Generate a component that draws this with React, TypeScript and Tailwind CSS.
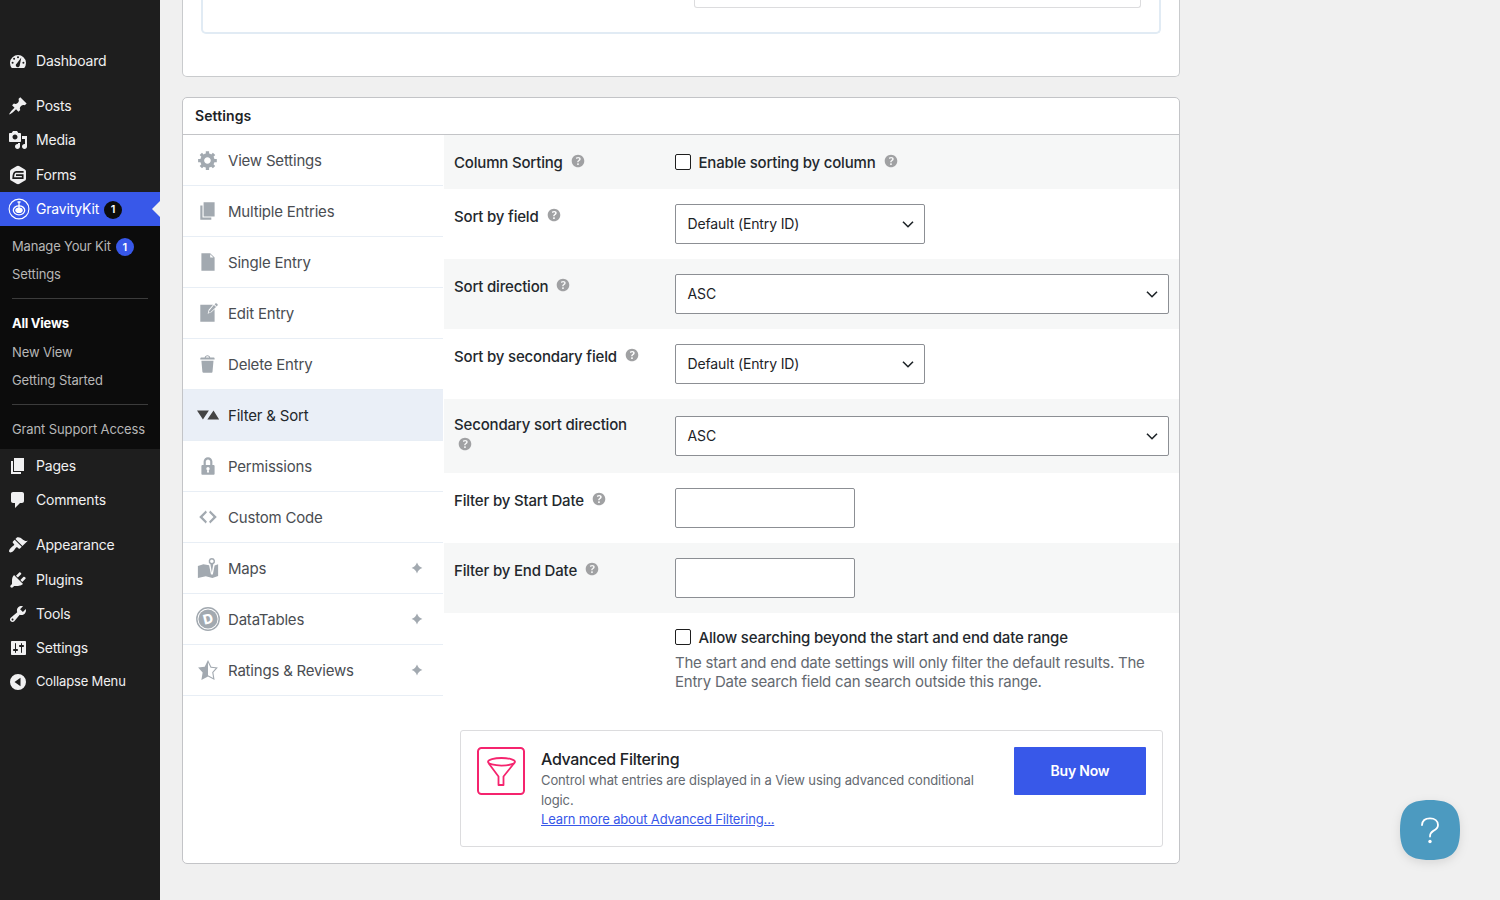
import type { ReactNode } from 'react'

const icons: Record<string, string> = {
    post: 'M10.44 3.02l1.82-1.82 6.36 6.35-1.83 1.82c-1.05-.68-2.48-.57-3.41.36l-.75.75c-.92.93-1.04 2.35-.35 3.41l-1.83 1.82-2.41-2.41-2.8 2.79c-.42.42-3.38 2.71-3.8 2.29s1.86-3.39 2.28-3.81l2.79-2.79L4.1 9.36l1.83-1.82c1.05.69 2.48.57 3.4-.36l.75-.75c.93-.92 1.05-2.35.36-3.41z',
    media: 'M13 11V4c0-.55-.45-1-1-1h-1.67L9 1H5L3.67 3H2c-.55 0-1 .45-1 1v7c0 .55.45 1 1 1h10c.55 0 1-.45 1-1zM7 4.5c1.38 0 2.5 1.12 2.5 2.5S8.38 9.5 7 9.5 4.5 8.38 4.5 7 5.62 4.5 7 4.5zM14 6h5v10.5c0 1.38-1.12 2.5-2.5 2.5S14 17.88 14 16.5s1.12-2.5 2.5-2.5c.17 0 .34.02.5.05V9h-3V6zm-4 8.05V13h2v3.5c0 1.38-1.12 2.5-2.5 2.5S7 17.88 7 16.5 8.12 14 9.5 14c.17 0 .34.02.5.05z',
    pages: 'M6 15V2h10v13H6zm-1 1h8v2H3V5h2v11z',
    comments: 'M5 2h9c1.1 0 2 .9 2 2v7c0 1.1-.9 2-2 2h-2l-5 5v-5H5c-1.1 0-2-.9-2-2V4c0-1.1.9-2 2-2z',
    appearance: 'M14.48 11.06L7.41 3.99l1.5-1.5c.5-.56 2.3-.47 3.51.32 1.21.8 1.43 1.28 2.91 2.1 1.18.64 2.45 1.26 4.45.85zm-.71.71L6.7 4.7 4.93 6.47c-.39.39-.39 1.02 0 1.41l1.06 1.06c.39.39.39 1.03 0 1.42-.6.6-1.43 1.11-2.21 1.69-.35.26-.7.53-1.01.84C1.43 14.23.4 16.08 1.4 17.07c.99 1 2.84-.03 4.18-1.36.31-.31.58-.66.85-1.02.57-.78 1.08-1.61 1.69-2.21.39-.39 1.02-.39 1.41 0l1.06 1.06c.39.39 1.02.39 1.41 0z',
    plugins: 'M13.11 4.36L9.87 7.6 8 5.73l3.24-3.24c.35-.34 1.05-.2 1.56.32.52.51.66 1.21.31 1.55zm-8 1.77l.91-1.12 9.01 9.01-1.19.84c-.71.71-2.63 1.16-3.82 1.16H6.14L4.9 17.26c-.59.59-1.54.59-2.12 0-.59-.58-.59-1.53 0-2.12l1.24-1.24v-3.88c0-1.13.4-3.19 1.09-3.89zm7.26 3.97l3.24-3.24c.34-.35 1.04-.21 1.55.31.52.51.66 1.21.31 1.55l-3.24 3.25z',
    tools: 'M16.68 9.77c-1.34 1.34-3.3 1.67-4.95.99l-5.41 6.52c-.99.99-2.59.99-3.58 0s-.99-2.59 0-3.57l6.52-5.42c-.68-1.65-.35-3.61.99-4.95 1.28-1.28 3.12-1.62 4.72-1.06l-2.89 2.89 2.82 2.82 2.86-2.87c.53 1.58.18 3.39-1.08 4.65zM3.81 16.21c.4.39 1.04.39 1.43 0 .4-.4.4-1.04 0-1.43-.39-.4-1.03-.4-1.43 0-.39.39-.39 1.03 0 1.43z',
    settings: 'M18 16V4c0-.55-.45-1-1-1H4c-.55 0-1 .45-1 1v12c0 .55.45 1 1 1h13c.55 0 1-.45 1-1zM8 11h1c.55 0 1 .45 1 1s-.45 1-1 1H8v1.5c0 .28-.22.5-.5.5s-.5-.22-.5-.5V13H6c-.55 0-1-.45-1-1s.45-1 1-1h1V5.5c0-.28.22-.5.5-.5s.5.22.5.5V11zm5-2h-1c-.55 0-1-.45-1-1s.45-1 1-1h1V5.5c0-.28.22-.5.5-.5s.5.22.5.5V7h1c.55 0 1 .45 1 1s-.45 1-1 1h-1v5.5c0 .28-.22.5-.5.5s-.5-.22-.5-.5V9z',
    collapse: 'M10 2a8 8 0 1 1 0 16 8 8 0 0 1 0-16zM12.500 5.800L6.500 10l6 4.200z',
    dashboard: 'M3.76 17h12.48A8 8 0 1 0 3.76 17zM10 5.2a1 1 0 1 0 0 2 1 1 0 0 0 0-2zM6.100 6.800a1 1 0 1 0 0 2 1 1 0 0 0 0-2zM4.600 10.800a1 1 0 1 0 0 2 1 1 0 0 0 0-2zM15.400 10.800a1 1 0 1 0 0 2 1 1 0 0 0 0-2zM13.300 6.600l-4.500 5.900a2 2 0 1 0 3 1.400z',
    gear: 'M18 12h-2.18c-.17.7-.44 1.35-.81 1.93l1.54 1.54-2.1 2.1-1.54-1.54c-.58.36-1.23.63-1.91.79V19H8v-2.18c-.68-.16-1.33-.43-1.91-.79l-1.54 1.54-2.12-2.12 1.54-1.54c-.36-.58-.63-1.23-.79-1.91H1V9.03h2.17c.16-.7.44-1.35.8-1.94L2.43 5.55l2.1-2.1 1.54 1.54c.58-.37 1.24-.64 1.93-.81V2h3v2.18c.68.16 1.33.43 1.91.79l1.54-1.54 2.12 2.12-1.54 1.54c.36.59.64 1.24.8 1.94H18V12zm-8.5 1.5c1.66 0 3-1.34 3-3s-1.34-3-3-3-3 1.34-3 3 1.34 3 3 3z',
    file: 'M12 2l4 4v12H4V2h8zm0 4h3l-3-3v3z',
    edit: 'M3 2.600h11.600L10.600 7l-.9 3.600 3.400-1.200L16 6.500V18H3zM17 1.200c.6-.5 2.400 1 1.800 1.800l-.9 1-1.900-1.900zM15.400 2.700l1.900 1.900-5 4.700-1.700.5.500-1.800z',
    trash: 'M12 4h3c.6 0 1 .4 1 1v1H3V5c0-.6.5-1 1-1h3c.2-1.1 1.3-2 2.5-2s2.3.9 2.5 2zM8 4h3c-.2-.6-.9-1-1.5-1S8.200 3.400 8 4zM4 7h11l-.9 10.1c0 .5-.5.9-1 .9H5.900c-.5 0-.9-.4-1-.9L4 7z',
    sort: 'M0 6h10.800L5.400 14.200zM9.400 14.200h10.800L15 6z',
    lock: 'M14 9h1c.55 0 1 .45 1 1v7c0 .55-.45 1-1 1H5c-.55 0-1-.45-1-1v-7c0-.55.45-1 1-1h1V6c0-2.21 1.79-4 4-4s4 1.79 4 4v3zm-2 0V6c0-1.1-.9-2-2-2s-2 .9-2 2v3h4zm-1 7l-.36-2.15c.51-.24.86-.75.86-1.35 0-.83-.67-1.5-1.5-1.5s-1.5.67-1.5 1.5c0 .6.35 1.11.86 1.35L9 16h2z',
    code: 'M9 6l-4 4 4 4-1 2-6-6 6-6zm2 8l4-4-4-4 1-2 6 6-6 6z',
    map: 'M13.500 1a2.900 2.900 0 0 1 1.300 5.500L13.500 14l-1.300-7.500A2.900 2.900 0 0 1 13.500 1zm0 1.300a1.600 1.600 0 1 0 0 3.200 1.600 1.600 0 0 0 0-3.200zM.8 8.200l5-1.700 5.200 1L12.700 16h1.700l1.600-8.300 3.200-1.200v10.800L14 19l-6-1.500L.8 19z',
    star: 'M10 1L7 7l-6 .75 4.13 4.62L4 19l6-3 6 3-1.12-6.63L19 7.75 13 7zm0 2.24l2.34 4.69 4.65.58-3.18 3.56.87 5.15L10 14.88V3.24z',
    help: 'M17 10c0-3.87-3.14-7-7-7-3.87 0-7 3.13-7 7s3.13 7 7 7c3.86 0 7-3.13 7-7zm-6.3 1.48H9.14v-.43c0-.38.08-.7.24-.98s.46-.57.88-.89c.41-.29.68-.53.81-.71.14-.18.2-.39.2-.62 0-.25-.09-.44-.28-.58-.19-.13-.45-.19-.79-.19-.58 0-1.25.19-2 .57l-.64-1.28c.87-.49 1.8-.74 2.77-.74.81 0 1.45.2 1.92.58.48.39.71.91.71 1.55 0 .43-.09.8-.29 1.11-.19.32-.57.67-1.11 1.06-.38.28-.61.49-.71.63-.1.15-.15.34-.15.57v.35zm-1.47 2.74c-.18-.17-.27-.42-.27-.73 0-.33.08-.58.26-.75s.43-.25.77-.25c.32 0 .57.09.75.26s.27.42.27.74c0 .3-.09.55-.27.72-.18.18-.43.27-.75.27-.33 0-.58-.09-.76-.26z',
    spark: 'M10 1Q12.200 7.800 19 10Q12.200 12.200 10 19Q7.800 12.200 1 10Q7.800 7.800 10 1z',
}

const Icon = ({ name, className }: { name: string; className?: string }) => {
    if (name === 'forms') {
        return (
            <svg viewBox="0 0 20 20" className={className}>
                <path fill="currentColor" d="M10 .8c.6 0 1 .2 1.5.5l5 2.900c1 .6 1.500 1.300 1.500 2.400v6.800c0 1.100-.5 1.800-1.500 2.400l-5 2.900c-1 .6-2 .6-3 0l-5-2.900C2.500 15.200 2 14.500 2 13.400V6.600c0-1.100.5-1.800 1.500-2.400l5-2.900c.5-.3.900-.5 1.500-.5z" />
                <path fill="none" stroke="#1e1e1e" strokeWidth="1.7" d="M15.600 6.900H8.200c-2 0-2.900 2.300-3 6.200h9.500v-3H8" />
            </svg>
        )
    }
    if (name === 'kit') {
        return (
            <svg viewBox="0 0 22 22" className={className} fill="none" stroke="currentColor">
                <circle cx="11" cy="11" r="9.9" strokeWidth="1.1" />
                <ellipse cx="11" cy="12.3" rx="5.7" ry="4.5" strokeWidth="1.3" />
                <ellipse cx="11" cy="12.3" rx="3.7" ry="2.8" fill="currentColor" stroke="none" />
                <path strokeWidth="1.3" d="M11 3.500v7M9.500 4h3" />
            </svg>
        )
    }
    if (name === 'datatables') {
        return (
            <svg viewBox="0 0 24 24" className={className} fill="none" stroke="currentColor">
                <circle cx="12" cy="12" r="11.2" strokeWidth="1.4" />
                <circle cx="12" cy="12" r="9.6" fill="currentColor" stroke="none" />
                <text x="12" y="16.8" textAnchor="middle" transform="rotate(-14 12 12)" fontSize="13.5" fontWeight="800" fill="#fff" stroke="none">D</text>
            </svg>
        )
    }
    return (
        <svg viewBox="0 0 20 20" className={className}>
            <path fill="currentColor" fillRule="evenodd" d={icons[name]} />
        </svg>
    )
}

const MenuItem = ({ icon, label }: { icon: string; label: string }) => (
    <li className="flex h-[34.3px] items-center pl-2 text-sm tracking-[-0.2px] text-[#f0f0f1]">
        <Icon name={icon} className="h-5 w-5" />
        <span className="ml-2">{label}</span>
    </li>
)

const Sidebar = () => (
    <nav className="w-40 shrink-0 bg-[#1e1e1e] pt-11">
        <ul>
            <MenuItem icon="dashboard" label="Dashboard" />
            <li className="h-[10.7px]" />
            <MenuItem icon="post" label="Posts" />
            <MenuItem icon="media" label="Media" />
            <MenuItem icon="forms" label="Forms" />
            <li className="flex h-[34.3px] items-center overflow-hidden bg-[#3858e9] pl-[7.5px] text-sm tracking-[-0.2px] text-white">
                <Icon name="kit" className="h-[22px] w-[22px]" />
                <span className="ml-[6.5px]">GravityKit</span>
                <span className="ml-[5px] mt-0.5 flex h-[18px] w-[18px] items-center justify-center rounded-full bg-[#0c0c0c] text-[11px] font-semibold">1</span>
                <span className="ml-auto border-y-8 border-r-8 border-y-transparent border-r-[#f0f0f0]" />
            </li>
        </ul>

        {/* GravityKit submenu */}
        <div className="h-[222.7px] bg-[#0c0c0c] px-3 pt-[6px] text-[13px] tracking-[-0.12px] text-[#b7b7b7]">
            <div className="flex h-[29px] items-center">
                <span className="tracking-[-0.17px]">Manage Your Kit</span>
                <span className="ml-[5px] mt-px flex h-[18px] w-[18px] items-center justify-center rounded-full bg-[#3858e9] text-[11px] font-semibold text-white">1</span>
            </div>
            <div className="flex h-[27px] items-center">Settings</div>
            <div className="mt-[10px] mb-[11px] h-px bg-[#3c3c3c]" />
            <div className="flex h-[28px] items-center font-bold tracking-[-0.25px] text-white">All Views</div>
            <div className="flex h-[29px] items-center">New View</div>
            <div className="flex h-[28px] items-center">Getting Started</div>
            <div className="mt-[9px] mb-[11px] h-px bg-[#3c3c3c]" />
            <div className="flex h-[28px] items-center whitespace-nowrap">Grant Support Access</div>
        </div>

        <ul>
            <MenuItem icon="pages" label="Pages" />
            <MenuItem icon="comments" label="Comments" />
            <li className="h-[10.7px]" />
            <MenuItem icon="appearance" label="Appearance" />
            <MenuItem icon="plugins" label="Plugins" />
            <MenuItem icon="tools" label="Tools" />
            <MenuItem icon="settings" label="Settings" />
            <li className="flex h-[33px] items-center pl-2 text-[13px] tracking-[-0.15px] text-[#f0f0f1]">
                <Icon name="collapse" className="h-5 w-5" />
                <span className="ml-2">Collapse Menu</span>
            </li>
        </ul>
    </nav>
)

const tabs = [
    { icon: 'gear', label: 'View Settings' },
    { icon: 'pages', label: 'Multiple Entries' },
    { icon: 'file', label: 'Single Entry' },
    { icon: 'edit', label: 'Edit Entry' },
    { icon: 'trash', label: 'Delete Entry' },
    { icon: 'sort', label: 'Filter & Sort', active: true },
    { icon: 'lock', label: 'Permissions' },
    { icon: 'code', label: 'Custom Code' },
    { icon: 'map', label: 'Maps', extra: true },
    { icon: 'datatables', label: 'DataTables', extra: true },
    { icon: 'star', label: 'Ratings & Reviews', extra: true },
]

const Help = ({ className }: { className: string }) => (
    <Icon name="help" className={`h-[18px] w-[18px] shrink-0 text-[#a0a1a3] ${className}`} />
)

const Select = ({ value, className }: { value: string; className: string }) => (
    <div className={`flex h-10 items-center justify-between rounded-[2px] border border-[#8c8f94] bg-white pr-[9px] pl-[11.5px] text-sm tracking-[-0.13px] text-[#1d2327] ${className}`}>
        {value}
        <svg viewBox="0 0 14 14" className="h-[14px] w-[14px]" fill="none" stroke="#1d2327" strokeWidth="1.6">
            <path d="M2 4.700l5 5 5-5" />
        </svg>
    </div>
)

const Checkbox = () => <span className="h-4 w-4 shrink-0 rounded-[2px] border border-[#1e1e1e] bg-white" />

const Row = ({ label, className, children }: { label: string; className: string; children: ReactNode }) => (
    <div className={`flex pl-[10px] ${className}`}>
        <div className="flex w-[221px] items-start pt-[17px] text-[15px] leading-[21px] font-medium tracking-[-0.18px] text-[#23282d]">
            {label}
            <Help className="ml-[6px]" />
        </div>
        {children}
    </div>
)

const App = () => {
    return (
        <div className="flex h-[900px] w-[1500px] overflow-hidden bg-[#f0f0f0] font-['Inter',sans-serif]">
            <Sidebar />

            <main className="ml-[22px] w-[998px]">
                {/* bottom of the layout editor */}
                <section className="h-[77px] rounded-b-[5px] border border-t-0 border-[#c9cbcd] bg-white px-[18px]">
                    <div className="h-[34px] rounded-b-[5px] border-2 border-t-0 border-[#e1ebf4] pr-[18px]">
                        <div className="ml-auto h-2 w-[447px] rounded-b-[3px] border border-t-0 border-[#dcdcde]" />
                    </div>
                </section>

                <section className="mt-5 h-[767px] rounded-[5px] border border-[#c3c4c7] bg-white">
                    <h2 className="flex h-[37px] items-center border-b border-[#c3c4c7] pl-3 text-sm font-semibold tracking-[0.1px] text-[#1d2327]">Settings</h2>

                    <div className="flex">
                        <ul className="w-[260px] shrink-0">
                            {tabs.map((tab) => (
                                <li
                                    key={tab.label}
                                    className={`flex h-[51px] items-center border-b border-[#e8eef5] pl-[13px] text-[15px] tracking-[-0.2px] ${tab.active ? 'bg-[#eaeff7] text-[#23282d]' : 'text-[#4a4d52]'}`}
                                >
                                    <span className={`flex w-6 justify-center ${tab.active ? 'text-[#444]' : 'text-[#a2a9b0]'}`}>
                                        <Icon name={tab.icon} className={tab.icon === 'datatables' ? 'h-6 w-6' : 'h-[22px] w-[22px]'} />
                                    </span>
                                    <span className="mt-0.5 ml-2">{tab.label}</span>
                                    {tab.extra && <Icon name="spark" className="mr-5 ml-auto h-3 w-3 text-[#a2a9b0]" />}
                                </li>
                            ))}
                        </ul>

                        <div className="ml-px w-[735px]">
                            <Row label="Column Sorting" className="h-[54px] bg-[#f6f7f7]">
                                <div className="flex items-center text-[15px] font-medium tracking-[-0.18px] text-[#23282d]">
                                    <Checkbox />
                                    <span className="mt-0.5 ml-[7.5px]">Enable sorting by column</span>
                                    <Help className="ml-[6px] -mt-[2px]" />
                                </div>
                            </Row>
                            <Row label="Sort by field" className="h-[70px]">
                                <Select value="Default (Entry ID)" className="mt-[15px] w-[250px]" />
                            </Row>
                            <Row label="Sort direction" className="h-[70px] bg-[#f6f7f7]">
                                <Select value="ASC" className="mt-[15px] w-[494px]" />
                            </Row>
                            <Row label="Sort by secondary field" className="h-[70px]">
                                <Select value="Default (Entry ID)" className="mt-[15px] w-[250px]" />
                            </Row>
                            <div className="flex h-[74px] bg-[#f6f7f7] pl-[10px]">
                                <div className="w-[221px] pt-[15px] text-[15px] leading-[21px] font-medium tracking-[-0.17px] text-[#23282d]">
                                    <p>Secondary sort direction</p>
                                    <Help className="ml-[2px]" />
                                </div>
                                <Select value="ASC" className="mt-[17px] w-[494px]" />
                            </div>
                            <Row label="Filter by Start Date" className="h-[70px]">
                                <div className="mt-[15px] h-10 w-[180px] rounded-[2px] border border-[#8c8f94] bg-white" />
                            </Row>
                            <Row label="Filter by End Date" className="h-[70px] bg-[#f6f7f7]">
                                <div className="mt-[15px] h-10 w-[180px] rounded-[2px] border border-[#8c8f94] bg-white" />
                            </Row>

                            <div className="ml-[231px] h-[117px] pt-[14px] text-[15px]">
                                <div className="flex h-5 items-center font-medium tracking-[-0.18px] text-[#23282d]">
                                    <Checkbox />
                                    <span className="mt-0.5 ml-[7.5px]">Allow searching beyond the start and end date range</span>
                                </div>
                                <p className="mt-[6px] leading-[19px] tracking-[-0.23px] whitespace-nowrap text-[#646970]">
                                    The start and end date settings will only filter the default results. The
                                    <br />
                                    Entry Date search field can search outside this range.
                                </p>
                            </div>

                            {/* upsell */}
                            <div className="ml-4 flex h-[117px] w-[703px] items-start rounded-[3px] border border-[#dcdcde] p-4">
                                <svg viewBox="0 0 48 48" className="h-12 w-12" fill="none" stroke="#f5246e">
                                    <rect x="1" y="1" width="46" height="46" rx="3.5" strokeWidth="2" />
                                    <ellipse cx="24.5" cy="14.8" rx="13.5" ry="3.8" strokeWidth="1.8" />
                                    <path strokeWidth="1.8" strokeLinejoin="round" d="M11.800 16.500l9.700 13v8.500h5v-8.500l10.400-13" />
                                </svg>
                                <div className="ml-4 w-[473px] text-[13px] tracking-[-0.12px] text-[#646970]">
                                    <h3 className="text-base leading-6 font-medium tracking-[-0.33px] text-[#1d2327]">Advanced Filtering</h3>
                                    <p className="leading-[19.5px]">
                                        Control what entries are displayed in a View using advanced conditional
                                        <br />
                                        logic.
                                    </p>
                                    <a className="leading-[19.5px] tracking-[-0.16px] text-[#3858e9] underline">Learn more about Advanced Filtering...</a>
                                </div>
                                <button className="h-12 w-[132px] rounded-[1px] bg-[#3858e9] text-sm font-semibold tracking-[-0.2px] text-white">Buy Now</button>
                            </div>
                        </div>
                    </div>
                </section>
            </main>

            <button className="absolute top-[800px] left-[1400px] flex h-[60px] w-[60px] items-center justify-center drop-shadow-[0_3px_5px_rgba(0,0,0,0.1)]">
                <svg viewBox="0 0 60 60" className="h-[60px] w-[60px]" fill="none">
                    <path fill="#4c9ac0" d="M30 0C52 0 60 8 60 30S52 60 30 60 0 52 0 30 8 0 30 0z" />
                    <path stroke="#fff" strokeWidth="1.8" strokeLinecap="round" d="M22 25c.3-4.300 3.500-6.600 8-6.600 4.700 0 8 2.600 8 6.500 0 3.200-2.200 4.600-4.700 6-2.300 1.300-3.300 2.500-3.300 5.600" />
                    <circle cx="30" cy="41.5" r="1.7" fill="#fff" />
                </svg>
            </button>
        </div>
    )
}

export default App
